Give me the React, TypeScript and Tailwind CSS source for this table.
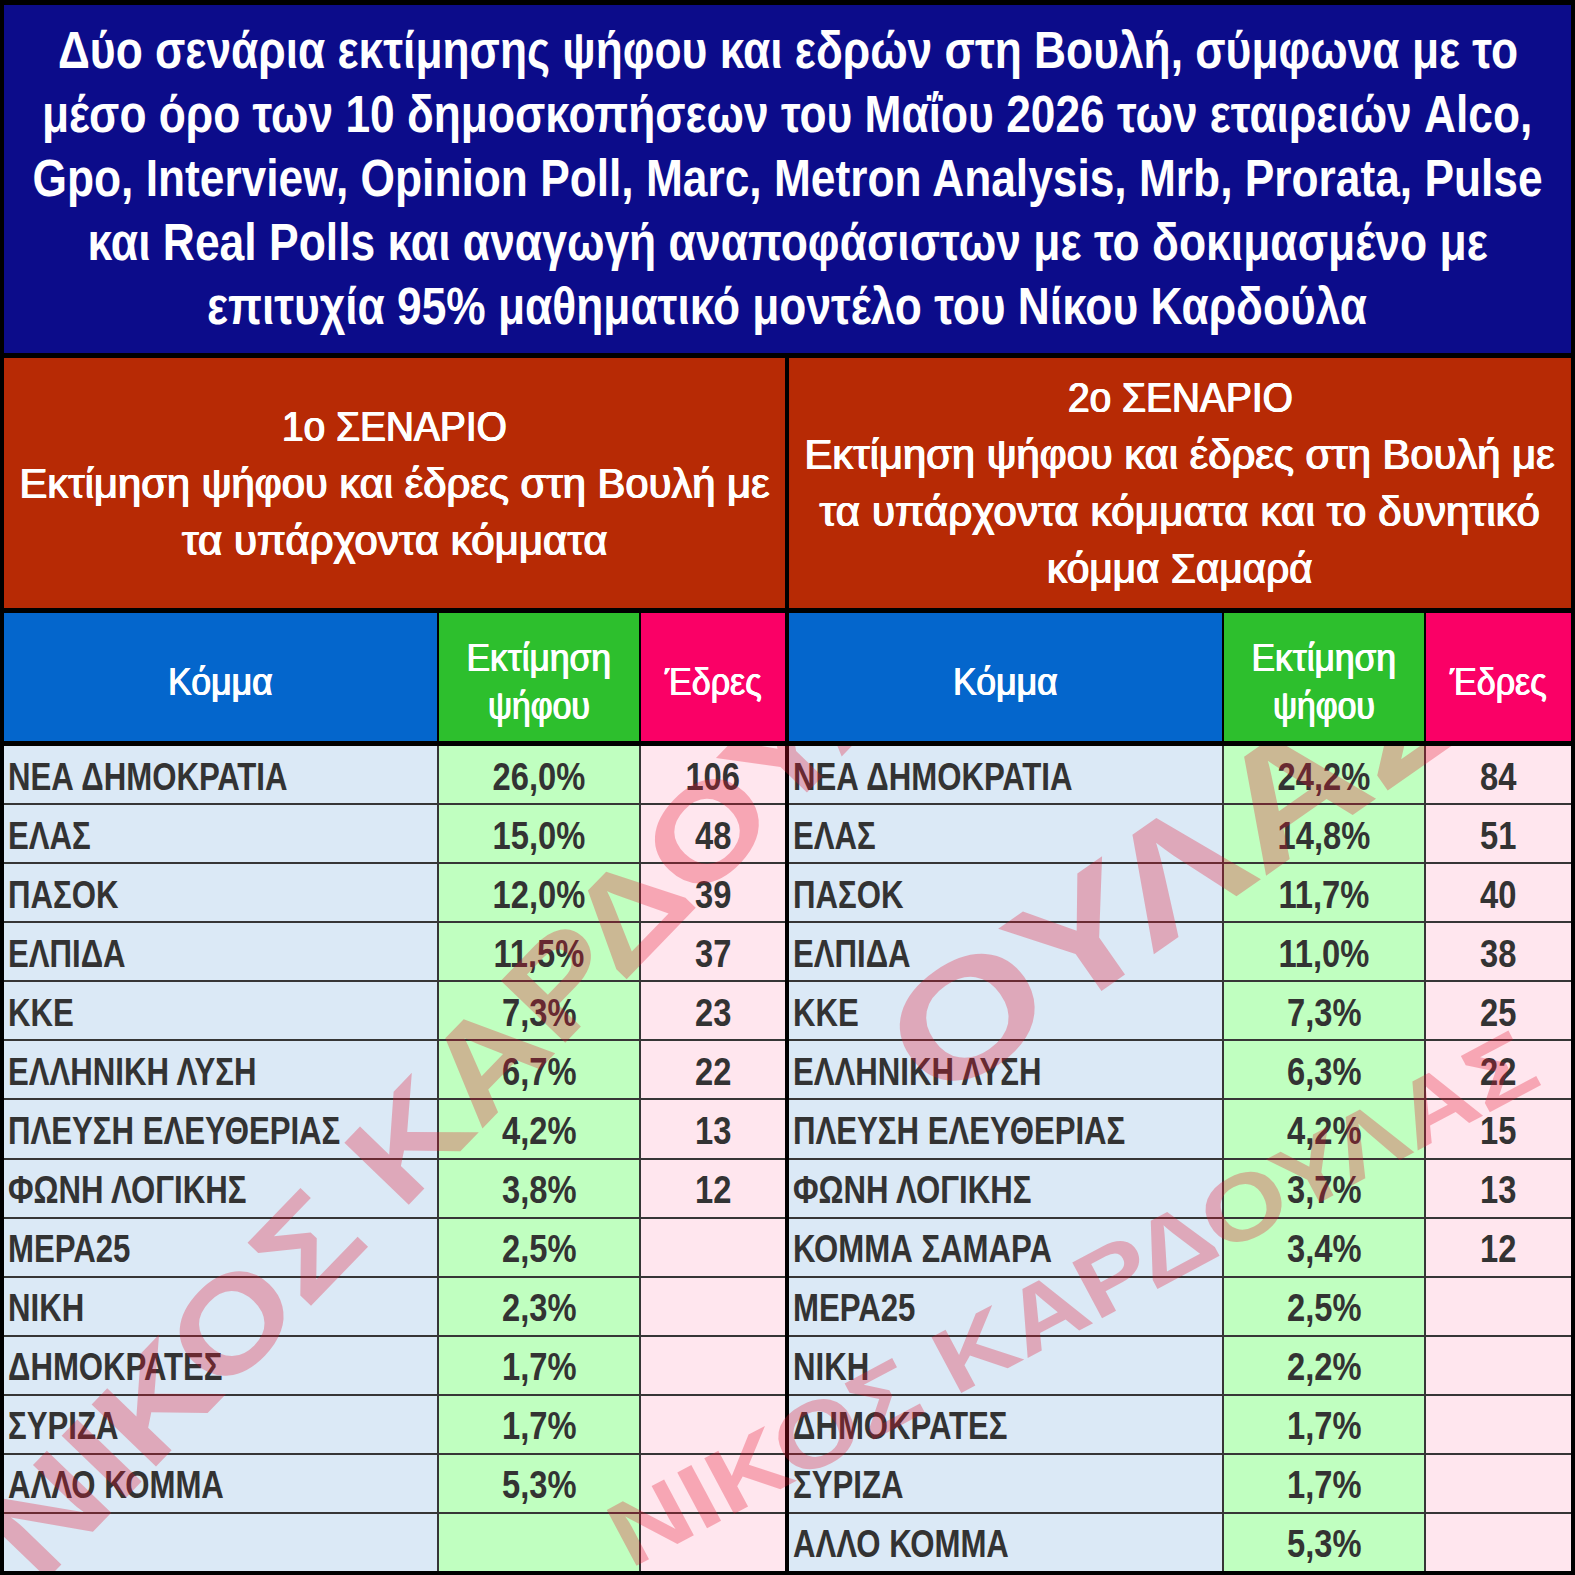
import React, { useLayoutEffect, useRef, useState } from "react";

function Fit({ w, children, className }: { w: number; children: React.ReactNode; className?: string }) {
  const ref = useRef<HTMLSpanElement>(null);
  const [s, setS] = useState(1);
  useLayoutEffect(() => {
    const measure = () => {
      const el = ref.current;
      if (el && el.offsetWidth > 0) setS(w / el.offsetWidth);
    };
    measure();
    const f = (document as any).fonts;
    if (f && f.ready) f.ready.then(measure);
  }, [w]);
  return (
    <span
      ref={ref}
      className={"inline-block shrink-0 whitespace-nowrap " + (className ?? "")}
      style={{ transform: `scaleX(${s})` }}
    >
      {children}
    </span>
  );
}

const FONT = "font-['Liberation_Sans',Arial,sans-serif]";

const left: [string, string, string][] = [
  ["ΝΕΑ ΔΗΜΟΚΡΑΤΙΑ", "26,0%", "106"],
  ["ΕΛΑΣ", "15,0%", "48"],
  ["ΠΑΣΟΚ", "12,0%", "39"],
  ["ΕΛΠΙΔΑ", "11,5%", "37"],
  ["ΚΚΕ", "7,3%", "23"],
  ["ΕΛΛΗΝΙΚΗ ΛΥΣΗ", "6,7%", "22"],
  ["ΠΛΕΥΣΗ ΕΛΕΥΘΕΡΙΑΣ", "4,2%", "13"],
  ["ΦΩΝΗ ΛΟΓΙΚΗΣ", "3,8%", "12"],
  ["ΜΕΡΑ25", "2,5%", ""],
  ["ΝΙΚΗ", "2,3%", ""],
  ["ΔΗΜΟΚΡΑΤΕΣ", "1,7%", ""],
  ["ΣΥΡΙΖΑ", "1,7%", ""],
  ["ΑΛΛΟ ΚΟΜΜΑ", "5,3%", ""],
  ["", "", ""],
];

const right: [string, string, string][] = [
  ["ΝΕΑ ΔΗΜΟΚΡΑΤΙΑ", "24,2%", "84"],
  ["ΕΛΑΣ", "14,8%", "51"],
  ["ΠΑΣΟΚ", "11,7%", "40"],
  ["ΕΛΠΙΔΑ", "11,0%", "38"],
  ["ΚΚΕ", "7,3%", "25"],
  ["ΕΛΛΗΝΙΚΗ ΛΥΣΗ", "6,3%", "22"],
  ["ΠΛΕΥΣΗ ΕΛΕΥΘΕΡΙΑΣ", "4,2%", "15"],
  ["ΦΩΝΗ ΛΟΓΙΚΗΣ", "3,7%", "13"],
  ["ΚΟΜΜΑ ΣΑΜΑΡΑ", "3,4%", "12"],
  ["ΜΕΡΑ25", "2,5%", ""],
  ["ΝΙΚΗ", "2,2%", ""],
  ["ΔΗΜΟΚΡΑΤΕΣ", "1,7%", ""],
  ["ΣΥΡΙΖΑ", "1,7%", ""],
  ["ΑΛΛΟ ΚΟΜΜΑ", "5,3%", ""],
];

function ColHeader({ cols }: { cols: string }) {
  return (
    <div
      className={`grid ${cols} gap-[2px] bg-black h-full text-white text-[39px] leading-[48px] [text-shadow:0.6px_0_0_white,-0.6px_0_0_white]`}
    >
      <div className="bg-[#0466cc] flex items-center justify-center pt-[10px]">
        <Fit w={105}>Κόμμα</Fit>
      </div>
      <div className="bg-[#2dbf2d] flex flex-col items-center justify-center pt-[10px]">
        <Fit w={145}>Εκτίμηση</Fit>
        <Fit w={102}>ψήφου</Fit>
      </div>
      <div className="bg-[#fa0066] flex items-center justify-center pt-[10px]">
        <Fit w={97}>Έδρες</Fit>
      </div>
    </div>
  );
}

function Body({ rows, cols }: { rows: [string, string, string][]; cols: string }) {
  return (
    <div
      className={`grid ${cols} grid-rows-[repeat(14,minmax(0,1fr))] gap-[2px] bg-[#363636] h-full overflow-hidden text-[38px] leading-[40px] font-bold text-[#333333]`}
    >
      {rows.map((r, i) => (
        <React.Fragment key={i}>
          <div className="bg-[#dbe9f6] flex items-center pl-[4px] pt-[4px] overflow-hidden">
            <span className="inline-block whitespace-nowrap origin-left scale-x-[0.82]">{r[0]}</span>
          </div>
          <div className="bg-[#c0ffc0] flex items-center justify-center pt-[4px]">
            <span className="inline-block whitespace-nowrap scale-x-[0.86]">{r[1]}</span>
          </div>
          <div className="bg-[#ffe6ee] flex items-center justify-center pt-[4px]">
            <span className="inline-block whitespace-nowrap scale-x-[0.86]">{r[2]}</span>
          </div>
        </React.Fragment>
      ))}
    </div>
  );
}

export default function App() {
  const headerLines: [string, number][] = [
    ["Δύο σενάρια εκτίμησης ψήφου και εδρών στη Βουλή, σύμφωνα με το", 1460],
    ["μέσο όρο των 10 δημοσκοπήσεων του Μαΐου 2026 των εταιρειών Alco,", 1490],
    ["Gpo, Interview, Opinion Poll, Marc, Metron Analysis, Mrb, Prorata, Pulse", 1510],
    ["και Real Polls και αναγωγή αναποφάσιστων με το δοκιμασμένο με", 1400],
    ["επιτυχία 95% μαθηματικό μοντέλο του Νίκου Καρδούλα", 1160],
  ];
  const leftCols = "grid-cols-[433px_200px_144px]";
  const rightCols = "grid-cols-[433px_200px_145px]";
  return (
    <div className={`w-[1575px] h-[1575px] bg-black pt-[5px] px-[4px] pb-[4px] flex flex-col ${FONT}`}>
      {/* Title */}
      <div className="h-[348px] shrink-0 bg-[#0c0c8a] flex flex-col items-center justify-center text-white font-bold text-[51px] leading-[64px] overflow-hidden">
        {headerLines.map(([t, w], i) => (
          <div key={i} className="w-full flex justify-center">
            <Fit w={w}>{t}</Fit>
          </div>
        ))}
      </div>

      {/* Scenario headers */}
      <div className="mt-[5px] h-[250px] shrink-0 flex gap-[4px] text-white text-[43px] leading-[57px] [text-shadow:0.7px_0_0_white,-0.7px_0_0_white,0_0.4px_0_white]">
        <div className="w-[781px] bg-[#b72a05] flex flex-col items-center justify-center overflow-hidden">
          <Fit w={225}>1ο ΣΕΝΑΡΙΟ</Fit>
          <Fit w={750}>Εκτίμηση ψήφου και έδρες στη Βουλή με</Fit>
          <Fit w={426}>τα υπάρχοντα κόμματα</Fit>
        </div>
        <div className="flex-1 bg-[#b72a05] flex flex-col items-center justify-center overflow-hidden">
          <Fit w={225}>2ο ΣΕΝΑΡΙΟ</Fit>
          <Fit w={750}>Εκτίμηση ψήφου και έδρες στη Βουλή με</Fit>
          <Fit w={720}>τα υπάρχοντα κόμματα και το δυνητικό</Fit>
          <Fit w={266}>κόμμα Σαμαρά</Fit>
        </div>
      </div>

      {/* Column headers */}
      <div className="mt-[5px] h-[128px] shrink-0 flex gap-[4px]">
        <div className="w-[781px]">
          <ColHeader cols={leftCols} />
        </div>
        <div className="flex-1">
          <ColHeader cols={rightCols} />
        </div>
      </div>

      {/* Body */}
      <div className="mt-[5px] h-[825px] shrink-0 relative">
        <div className="h-full flex gap-[4px]">
          <div className="w-[781px] h-full">
            <Body rows={left} cols={leftCols} />
          </div>
          <div className="flex-1 h-full">
            <Body rows={right} cols={rightCols} />
          </div>
        </div>
        {/* Watermark */}
        <div className="absolute inset-0 overflow-hidden pointer-events-none font-black text-[rgba(228,20,45,0.3)] leading-none">
          <span className="absolute left-[4px] top-[744px] text-[130px] whitespace-nowrap origin-left rotate-[-46deg] scale-x-[1.2]">
            ΝΙΚΟΣ ΚΑΡΔΟΥΛΑΣ
          </span>
          <span className="absolute left-[611px] top-[749px] text-[92px] whitespace-nowrap origin-left rotate-[-28deg] scale-x-[1.2]">
            ΝΙΚΟΣ ΚΑΡΔΟΥΛΑΣ
          </span>
          <span className="absolute left-[900px] top-[236px] text-[160px] whitespace-nowrap origin-left rotate-[-35deg] scale-x-[1.25]">
            ΟΥΛΑΣ
          </span>
        </div>
      </div>
    </div>
  );
}
